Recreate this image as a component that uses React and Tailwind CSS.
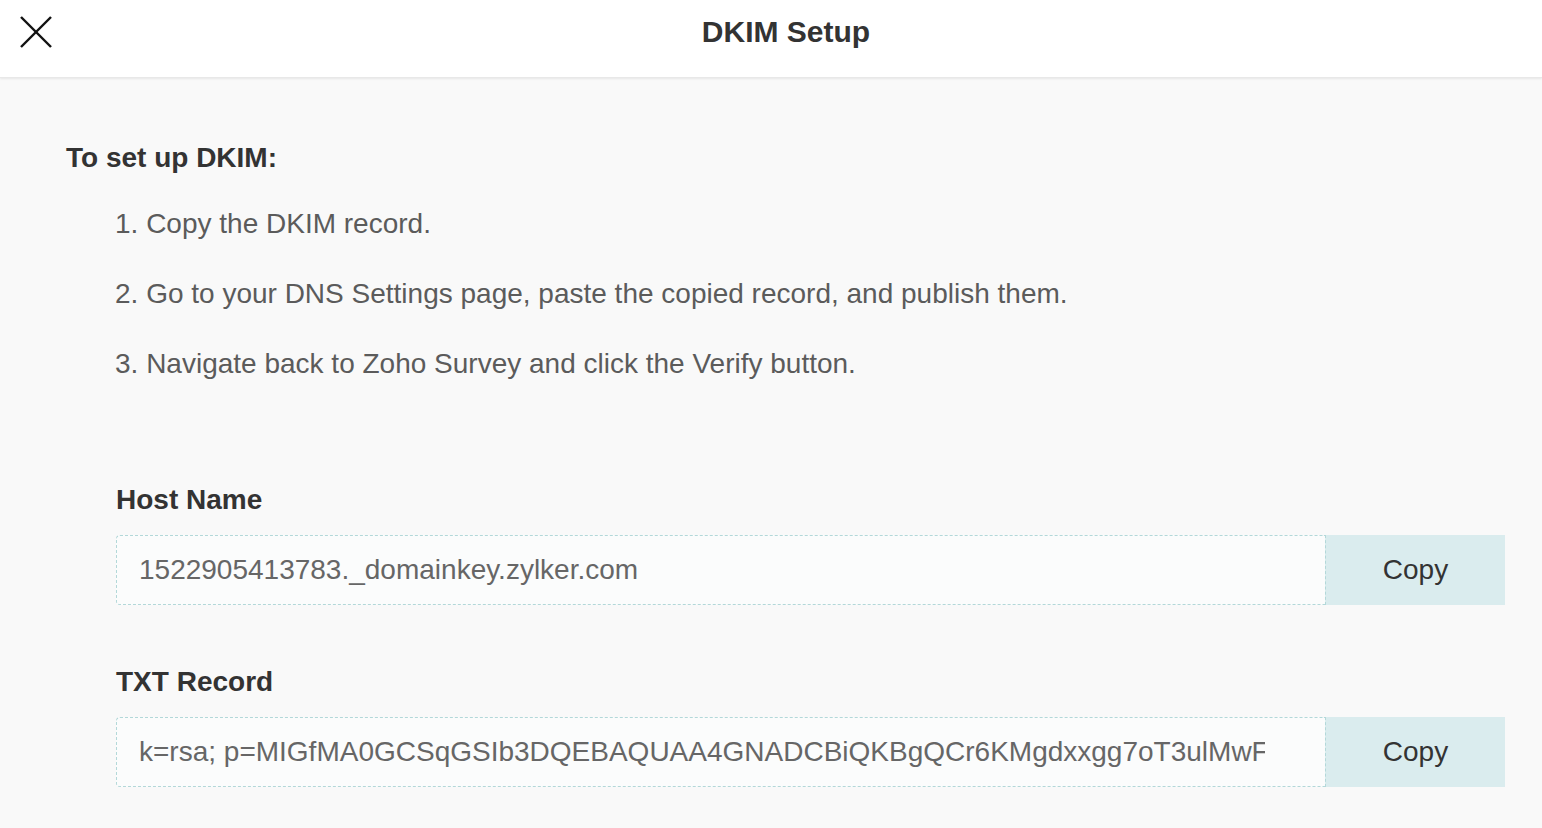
import { useState } from "react";

const STEPS = [
  "Copy the DKIM record.",
  "Go to your DNS Settings page, paste the copied record, and publish them.",
  "Navigate back to Zoho Survey and click the Verify button.",
];

const RECORDS = [
  { label: "Host Name", value: "1522905413783._domainkey.zylker.com" },
  {
    label: "TXT Record",
    value:
      "k=rsa; p=MIGfMA0GCSqGSIb3DQEBAQUAA4GNADCBiQKBgQCr6KMgdxxgg7oT3ulMwFhQ2xKcA8pLr0TbvN3yWq5Zs9eJ1kU4mD7fXoG2hRtB",
  },
];

function RecordField({ label, value }) {
  const [copied, setCopied] = useState(false);

  return (
    <div>
      <p className="text-[28px] leading-[40px] font-bold text-[#333333] mb-[15px]">{label}</p>
      <div className="flex h-[70px]">
        <div className="flex-1 min-w-0 flex items-center pl-[22px] pr-[60px] bg-[#fbfcfc] border border-dashed border-[#b3d8d9] border-r-0 rounded-l-[4px] overflow-hidden">
          <span className="block min-w-0 text-[28px] text-[#666666] whitespace-nowrap overflow-hidden">{value}</span>
        </div>
        <button
          onClick={() => setCopied(true)}
          className="w-[180px] h-full bg-[#daecee] border-l border-dashed border-[#b3d8d9] text-[28px] text-[#333333]"
          title={copied ? "Copied" : "Copy"}
        >
          Copy
        </button>
      </div>
    </div>
  );
}

function App() {
  return (
    <div
      className="min-h-screen bg-[#f9f9f9]"
      style={{ fontFamily: '"Liberation Sans", Arial, sans-serif' }}
    >
      <header className="relative h-[78px] bg-white flex items-center justify-center shadow-[0_1px_2px_rgba(0,0,0,0.08)] border-b border-[#e8e8e8]">
        <button className="absolute left-[20px] top-[16px] w-[32px] h-[32px]">
          <svg width="32" height="32" viewBox="0 0 32 32" fill="none" stroke="#111111" strokeWidth="2.4">
            <line x1="1" y1="1" x2="31" y2="31" />
            <line x1="31" y1="1" x2="1" y2="31" />
          </svg>
        </button>
        <h1 className="text-[30px] font-bold text-[#333333] -mt-[14px] ml-[30px]">DKIM Setup</h1>
      </header>

      <main className="pl-[66px] pr-[37px] pt-[60px]">
        <h2 className="text-[28px] leading-[40px] font-bold text-[#333333]">To set up DKIM:</h2>
        <ol className="mt-[26px] pl-[49px] flex flex-col gap-[30px]">
          {STEPS.map((step, i) => (
            <li key={i} className="text-[28px] leading-[40px] text-[#5b5b5b]">
              {i + 1}. {step}
            </li>
          ))}
        </ol>

        <div className="mt-[96px] pl-[50px] flex flex-col gap-[57px]">
          {RECORDS.map((r) => (
            <RecordField key={r.label} label={r.label} value={r.value} />
          ))}
        </div>
      </main>
    </div>
  );
}

export default App;
